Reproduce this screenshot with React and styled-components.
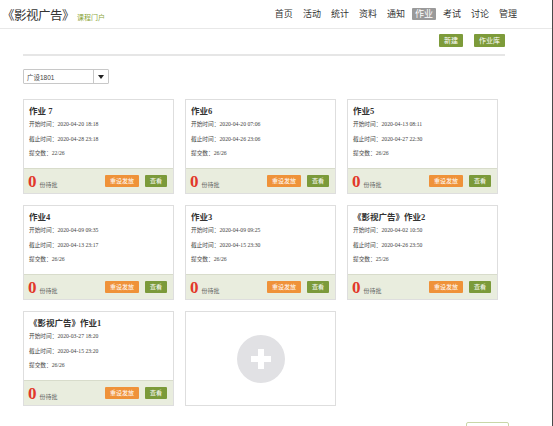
import React from "react";
import styled, { createGlobalStyle } from "styled-components";

const GlobalStyle = createGlobalStyle`
  html, body {
    margin: 0;
    padding: 0;
    background: #fff;
  }
  body {
    font-family: "Liberation Sans", "Noto Sans CJK SC", sans-serif;
    color: #333;
  }
`;

const navItems = ["首页", "活动", "统计", "资料", "通知", "作业", "考试", "讨论", "管理"];

const homeworks = [
  { title: "作业 7", start: "2020-04-20 18:18", end: "2020-04-28 23:18", count: "22/26" },
  { title: "作业6", start: "2020-04-20 07:06", end: "2020-04-26 23:06", count: "26/26" },
  { title: "作业5", start: "2020-04-13 08:11", end: "2020-04-27 22:30", count: "26/26" },
  { title: "作业4", start: "2020-04-09 09:35", end: "2020-04-13 23:17", count: "26/26" },
  { title: "作业3", start: "2020-04-09 09:25", end: "2020-04-15 23:30", count: "26/26" },
  { title: "《影视广告》作业2", start: "2020-04-02 10:50", end: "2020-04-26 23:50", count: "25/26" },
  { title: "《影视广告》作业1", start: "2020-03-27 18:20", end: "2020-04-15 23:20", count: "26/26" },
];

export default function App() {
  return (
    <>
      <GlobalStyle />
      <Page>
        <Header>
          <Brand>
            <h1>《影视广告》</h1>
            <span>课程门户</span>
          </Brand>
          <Nav>
            {navItems.map((item) => (
              <NavItem key={item} $active={item === "作业"}>
                {item}
              </NavItem>
            ))}
          </Nav>
        </Header>

        <Main>
          <Toolbar>
            <SmallButton>新建</SmallButton>
            <SmallButton>作业库</SmallButton>
          </Toolbar>

          <Select>
            <span>广设1801</span>
            <div className="arrow">
              <svg width="6" height="4" viewBox="0 0 6 4">
                <path d="M0 0 L6 0 L3 4 Z" fill="#222" />
              </svg>
            </div>
          </Select>

          <Grid>
            {homeworks.map((hw) => (
              <Card key={hw.title}>
                <CardBody>
                  <CardTitle>{hw.title}</CardTitle>
                  <Info>开始时间：{hw.start}</Info>
                  <Info>截止时间：{hw.end}</Info>
                  <Info>提交数：{hw.count}</Info>
                </CardBody>
                <CardFooter>
                  <Pending>
                    <b>0</b>
                    <span>份待批</span>
                  </Pending>
                  <ActionButton $color="#ef9239">重设发放</ActionButton>
                  <ActionButton $color="#7b9a3a">查看</ActionButton>
                </CardFooter>
              </Card>
            ))}
            <AddCard>
              <div className="circle">
                <svg width="20" height="20" viewBox="0 0 20 20">
                  <rect x="7" y="0" width="6" height="20" fill="#fff" />
                  <rect x="0" y="7" width="20" height="6" fill="#fff" />
                </svg>
              </div>
            </AddCard>
          </Grid>

          <Pager />
        </Main>
      </Page>
    </>
  );
}

const Page = styled.div`
  width: 552px;
  height: 426px;
  overflow: hidden;
  border-right: 1px solid #4a4a4a;
`;

const Header = styled.div`
  height: 28px;
  border-bottom: 1px solid #e8e8e8;
  display: flex;
  align-items: center;
  justify-content: space-between;
  padding: 0 32px 0 2px;
`;

const Brand = styled.div`
  display: flex;
  align-items: baseline;
  gap: 3px;
  h1 {
    margin: 0;
    font-size: 12.5px;
    font-weight: normal;
    color: #333;
    letter-spacing: -0.5px;
  }
  span {
    font-size: 7px;
    color: #8ba63a;
  }
`;

const Nav = styled.div`
  display: flex;
  align-items: center;
  gap: 4px;
`;

const NavItem = styled.div`
  font-size: 9px;
  line-height: 12px;
  padding: 0 3px;
  border-radius: 1px;
  color: ${(p) => (p.$active ? "#fff" : "#333")};
  background: ${(p) => (p.$active ? "#9a9a9a" : "transparent")};
`;

const Main = styled.div`
  width: 482px;
  padding-left: 23px;
`;

const Toolbar = styled.div`
  display: flex;
  justify-content: flex-end;
  gap: 11px;
  padding: 5px 0 7px;
  border-bottom: 2px solid #e6e6e6;
`;

const SmallButton = styled.div`
  height: 13px;
  line-height: 13px;
  padding: 0 5px;
  font-size: 7px;
  color: #fff;
  background: #7d9b3a;
  border-radius: 1px;
`;

const Select = styled.div`
  margin-top: 13px;
  width: 86px;
  height: 15px;
  box-sizing: border-box;
  border: 1px solid #c8c8c8;
  border-radius: 1px;
  display: flex;
  align-items: center;
  span {
    flex: 1;
    padding-left: 3px;
    font-size: 6.5px;
    color: #444;
  }
  .arrow {
    width: 14px;
    height: 100%;
    border-left: 1px solid #c8c8c8;
    display: flex;
    align-items: center;
    justify-content: center;
  }
`;

const Grid = styled.div`
  margin-top: 15px;
  display: grid;
  grid-template-columns: repeat(3, 151px);
  gap: 11px;
`;

const Card = styled.div`
  height: 95px;
  box-sizing: border-box;
  border: 1px solid #dedede;
  display: flex;
  flex-direction: column;
  background: #fff;
`;

const CardBody = styled.div`
  flex: 1;
  padding: 5px 5px 0;
  font-family: "Liberation Serif", "Noto Sans CJK SC", serif;
`;

const CardTitle = styled.div`
  font-size: 8.5px;
  line-height: 12px;
  font-weight: bold;
  color: #333;
`;

const Info = styled.div`
  font-size: 5.7px;
  line-height: 14.5px;
  color: #444;
`;

const CardFooter = styled.div`
  height: 25px;
  box-sizing: border-box;
  border-top: 1px solid #d8dccb;
  background: #e9edde;
  display: flex;
  align-items: center;
  gap: 6px;
  padding: 0 6px 0 4px;
`;

const Pending = styled.div`
  flex: 1;
  display: flex;
  align-items: baseline;
  gap: 3px;
  b {
    font-family: "Liberation Serif", serif;
    font-size: 17px;
    line-height: 17px;
    font-weight: bold;
    color: #e2382a;
  }
  span {
    font-size: 6px;
    color: #666;
  }
`;

const ActionButton = styled.div`
  height: 12px;
  line-height: 12px;
  padding: 0 5px;
  font-size: 6px;
  color: #fff;
  background: ${(p) => p.$color};
  border-radius: 1px;
`;

const AddCard = styled.div`
  height: 95px;
  box-sizing: border-box;
  border: 1px solid #dedede;
  display: flex;
  align-items: center;
  justify-content: center;
  .circle {
    width: 48px;
    height: 48px;
    border-radius: 50%;
    background: #e1e1e4;
    display: flex;
    align-items: center;
    justify-content: center;
  }
`;

const Pager = styled.div`
  margin: 16px 0 0 443px;
  width: 41px;
  height: 14px;
  border: 1px solid #c9d6a8;
  border-radius: 2px;
`;
